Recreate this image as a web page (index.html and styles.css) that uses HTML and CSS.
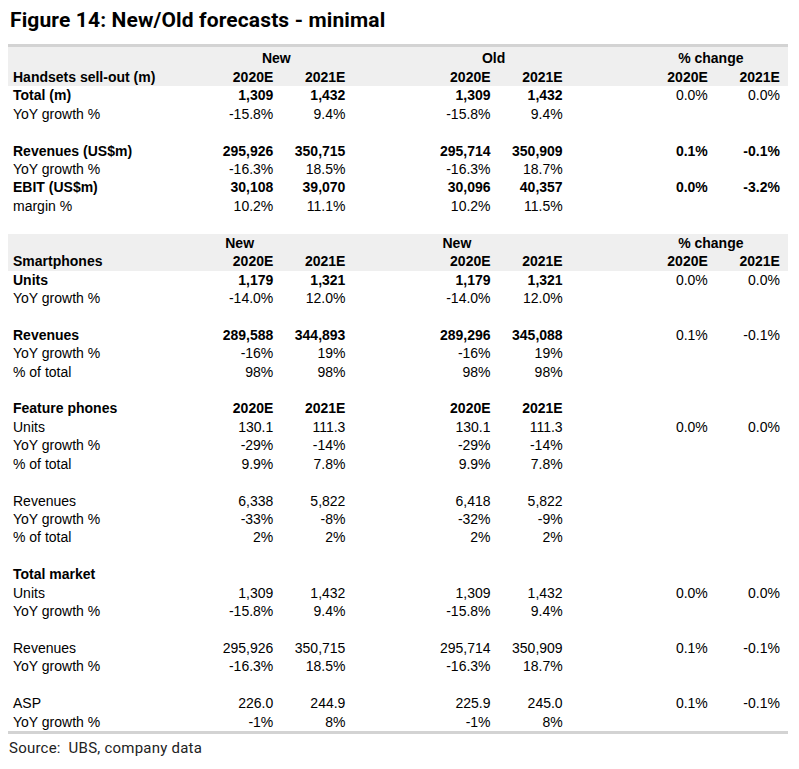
FILE: index.html
```html
<!DOCTYPE html>
<html>
<head>
<meta charset="utf-8">
<link rel="stylesheet" href="styles.css">
</head>
<body>
<div class="figure">
  <h1 class="title">Figure 14: New/Old forecasts - minimal</h1>
  <table class="data">
    <colgroup>
      <col class="c-label"><col class="c-num"><col class="c-num"><col class="c-gap"><col class="c-num"><col class="c-num"><col class="c-gap"><col class="c-num"><col class="c-num"><col class="c-end">
    </colgroup>
    <tbody>
      <tr class="hdr first"><td></td><td colspan="2" class="grp">New</td><td></td><td colspan="2" class="grp">Old</td><td></td><td colspan="2" class="grp">% change</td><td></td></tr>
      <tr class="hdr b"><td>Handsets sell-out (m)</td><td>2020E</td><td>2021E</td><td></td><td>2020E</td><td>2021E</td><td></td><td>2020E</td><td>2021E</td><td></td></tr>
      <tr class="b"><td>Total (m)</td><td>1,309</td><td>1,432</td><td></td><td>1,309</td><td>1,432</td><td></td><td class="n">0.0%</td><td class="n">0.0%</td><td></td></tr>
      <tr><td>YoY growth %</td><td>-15.8%</td><td>9.4%</td><td></td><td>-15.8%</td><td>9.4%</td><td></td><td></td><td></td><td></td></tr>
      <tr class="blank"><td colspan="10"></td></tr>
      <tr class="b"><td>Revenues (US$m)</td><td>295,926</td><td>350,715</td><td></td><td>295,714</td><td>350,909</td><td></td><td>0.1%</td><td>-0.1%</td><td></td></tr>
      <tr><td>YoY growth %</td><td>-16.3%</td><td>18.5%</td><td></td><td>-16.3%</td><td>18.7%</td><td></td><td></td><td></td><td></td></tr>
      <tr class="b"><td>EBIT (US$m)</td><td>30,108</td><td>39,070</td><td></td><td>30,096</td><td>40,357</td><td></td><td>0.0%</td><td>-3.2%</td><td></td></tr>
      <tr><td>margin %</td><td>10.2%</td><td>11.1%</td><td></td><td>10.2%</td><td>11.5%</td><td></td><td></td><td></td><td></td></tr>
      <tr class="blank"><td colspan="10"></td></tr>
      <tr class="hdr"><td></td><td class="lft">New</td><td></td><td></td><td class="lft">New</td><td></td><td></td><td colspan="2" class="grp">% change</td><td></td></tr>
      <tr class="hdr b"><td>Smartphones</td><td>2020E</td><td>2021E</td><td></td><td>2020E</td><td>2021E</td><td></td><td>2020E</td><td>2021E</td><td></td></tr>
      <tr class="b"><td>Units</td><td>1,179</td><td>1,321</td><td></td><td>1,179</td><td>1,321</td><td></td><td class="n">0.0%</td><td class="n">0.0%</td><td></td></tr>
      <tr><td>YoY growth %</td><td>-14.0%</td><td>12.0%</td><td></td><td>-14.0%</td><td>12.0%</td><td></td><td></td><td></td><td></td></tr>
      <tr class="blank"><td colspan="10"></td></tr>
      <tr class="b"><td>Revenues</td><td>289,588</td><td>344,893</td><td></td><td>289,296</td><td>345,088</td><td></td><td class="n">0.1%</td><td class="n">-0.1%</td><td></td></tr>
      <tr><td>YoY growth %</td><td>-16%</td><td>19%</td><td></td><td>-16%</td><td>19%</td><td></td><td></td><td></td><td></td></tr>
      <tr><td>% of total</td><td>98%</td><td>98%</td><td></td><td>98%</td><td>98%</td><td></td><td></td><td></td><td></td></tr>
      <tr class="blank"><td colspan="10"></td></tr>
      <tr class="b"><td>Feature phones</td><td>2020E</td><td>2021E</td><td></td><td>2020E</td><td>2021E</td><td></td><td></td><td></td><td></td></tr>
      <tr><td>Units</td><td>130.1</td><td>111.3</td><td></td><td>130.1</td><td>111.3</td><td></td><td>0.0%</td><td>0.0%</td><td></td></tr>
      <tr><td>YoY growth %</td><td>-29%</td><td>-14%</td><td></td><td>-29%</td><td>-14%</td><td></td><td></td><td></td><td></td></tr>
      <tr><td>% of total</td><td>9.9%</td><td>7.8%</td><td></td><td>9.9%</td><td>7.8%</td><td></td><td></td><td></td><td></td></tr>
      <tr class="blank"><td colspan="10"></td></tr>
      <tr><td>Revenues</td><td>6,338</td><td>5,822</td><td></td><td>6,418</td><td>5,822</td><td></td><td></td><td></td><td></td></tr>
      <tr><td>YoY growth %</td><td>-33%</td><td>-8%</td><td></td><td>-32%</td><td>-9%</td><td></td><td></td><td></td><td></td></tr>
      <tr><td>% of total</td><td>2%</td><td>2%</td><td></td><td>2%</td><td>2%</td><td></td><td></td><td></td><td></td></tr>
      <tr class="blank"><td colspan="10"></td></tr>
      <tr class="b"><td>Total market</td><td></td><td></td><td></td><td></td><td></td><td></td><td></td><td></td><td></td></tr>
      <tr><td>Units</td><td>1,309</td><td>1,432</td><td></td><td>1,309</td><td>1,432</td><td></td><td>0.0%</td><td>0.0%</td><td></td></tr>
      <tr><td>YoY growth %</td><td>-15.8%</td><td>9.4%</td><td></td><td>-15.8%</td><td>9.4%</td><td></td><td></td><td></td><td></td></tr>
      <tr class="blank"><td colspan="10"></td></tr>
      <tr><td>Revenues</td><td>295,926</td><td>350,715</td><td></td><td>295,714</td><td>350,909</td><td></td><td>0.1%</td><td>-0.1%</td><td></td></tr>
      <tr><td>YoY growth %</td><td>-16.3%</td><td>18.5%</td><td></td><td>-16.3%</td><td>18.7%</td><td></td><td></td><td></td><td></td></tr>
      <tr class="blank"><td colspan="10"></td></tr>
      <tr><td>ASP</td><td>226.0</td><td>244.9</td><td></td><td>225.9</td><td>245.0</td><td></td><td>0.1%</td><td>-0.1%</td><td></td></tr>
      <tr><td>YoY growth %</td><td>-1%</td><td>8%</td><td></td><td>-1%</td><td>8%</td><td></td><td></td><td></td><td></td></tr>
    </tbody>
  </table>
  <p class="source">Source:&nbsp; UBS, company data</p>
</div>
</body>
</html>
```
FILE: styles.css
```css
html, body {
  margin: 0;
  padding: 0;
  background: #ffffff;
}
body {
  padding: 8px;
  width: 780px;
  color: #000;
}
.figure {
  display: flex;
  flex-direction: column;
}
.title {
  margin: 0 0 0 2px;
  height: 34.5px;
  font-family: Roboto, "Liberation Sans", sans-serif;
  font-weight: 700;
  font-size: 21px;
  line-height: 22px;
  letter-spacing: 0.13px;
  padding-top: 1px;
  color: #000;
}
.data {
  border-collapse: collapse;
  table-layout: fixed;
  width: 780px;
  border-top: 3px solid #d3d3d3;
  border-bottom: 3px solid #d3d3d3;
  font-family: "Liberation Sans", Arial, sans-serif;
  font-size: 14px;
}
.c-label { width: 193px; }
.c-num { width: 72px; }
.c-gap { width: 73px; }
.c-end { width: 8px; }
.data td {
  height: 18.42px;
  line-height: 18.42px;
  padding: 0;
  text-align: right;
  white-space: nowrap;
  vertical-align: bottom;
}
.data td:first-child {
  text-align: left;
  padding-left: 5px;
}
.data tr.hdr td {
  background: #efefef;
  font-weight: 700;
}
.data tr.first td {
  height: 21.4px;
}
.data tr.b td {
  font-weight: 700;
}
.data td.n {
  font-weight: 400 !important;
}
.data td.grp {
  text-align: center;
  padding-left: 6px;
}
.data td.lft {
  text-align: left;
  padding-left: 24px;
}
.data tr.blank td {
  background: transparent;
}
.source {
  margin: 4px 0 0 1px;
  font-family: Roboto, "Liberation Sans", sans-serif;
  font-size: 15px;
  font-weight: 400;
  line-height: 20px;
  letter-spacing: 0.23px;
  color: #222;
}
```
